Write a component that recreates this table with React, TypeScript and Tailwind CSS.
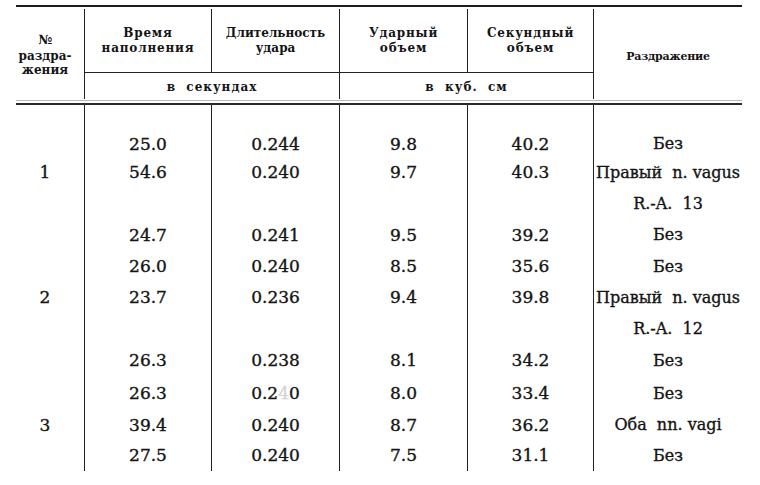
import React from 'react'

const widths = ['w-[68px]', 'w-[127px]', 'w-[128px]', 'w-[128px]', 'w-[126px]', 'w-[149px]']

const rowHeights = [
  'h-[27px]', 'h-[30px]', 'h-[32px]', 'h-[32px]', 'h-[31px]', 'h-[31px]',
  'h-[32px]', 'h-[33px]', 'h-[33px]', 'h-[30px]', 'h-[31px]',
]

type Cell = React.ReactNode

const rows: Cell[][] = [
  ['', '25.0', '0.244', '9.8', '40.2', 'Без'],
  ['1', '54.6', '0.240', '9.7', '40.3', 'Правый  n. vagus'],
  ['', '', '', '', '', 'R.-A.  13'],
  ['', '24.7', '0.241', '9.5', '39.2', 'Без'],
  ['', '26.0', '0.240', '8.5', '35.6', 'Без'],
  ['2', '23.7', '0.236', '9.4', '39.8', 'Правый  n. vagus'],
  ['', '', '', '', '', 'R.-A.  12'],
  ['', '26.3', '0.238', '8.1', '34.2', 'Без'],
  ['', '26.3', <>0.2<span className="text-[#d4d4d4]">4</span>0</>, '8.0', '33.4', 'Без'],
  ['3', '39.4', '0.240', '8.7', '36.2', 'Оба  nn. vagi'],
  ['', '27.5', '0.240', '7.5', '31.1', 'Без'],
]

function HeaderText({ children, tight }: { children: React.ReactNode; tight?: boolean }) {
  return (
    <div
      className={`text-[12px] font-bold leading-[15px] text-center ${tight ? 'tracking-[0px]' : 'tracking-[0.8px]'}`}
    >
      {children}
    </div>
  )
}

export default function App() {
  return (
    <div className="w-[760px] h-[485px] bg-white text-[#141414] pl-[16px] pt-[5px] font-['DejaVu_Serif',serif] overflow-hidden">
      <div className="w-[726px]">
        {/* верхняя линейка */}
        <div className="h-[2px] bg-[#1c1c1c]" />

        {/* шапка */}
        <div className="mt-[2px] grid grid-cols-[68px_127px_128px_128px_126px_149px] grid-rows-[63px_27px]">
          <div className="row-span-2 flex items-center justify-center pr-[10px] pt-[2px]">
            <div className="text-[12px] font-bold leading-[14px] text-center">
              <div className="text-[13px] mb-[2px]">№</div>
              <div>раздра-</div>
              <div>жения</div>
            </div>
          </div>
          <div className="border-l border-[#222] flex items-center justify-center">
            <HeaderText>
              Время
              <br />
              наполнения
            </HeaderText>
          </div>
          <div className="border-l border-[#222] flex items-center justify-center">
            <HeaderText tight>
              Длительность
              <br />
              удара
            </HeaderText>
          </div>
          <div className="border-l border-[#222] flex items-center justify-center">
            <HeaderText>
              Ударный
              <br />
              объем
            </HeaderText>
          </div>
          <div className="border-l border-[#222] flex items-center justify-center">
            <HeaderText>
              Секундный
              <br />
              объем
            </HeaderText>
          </div>
          <div className="row-span-2 border-l border-[#222] flex items-center justify-center pt-[7px]">
            <div className="text-[11px] font-bold tracking-[-0.2px]">Раздражение</div>
          </div>
          <div className="col-span-2 border-l border-t border-[#222] flex items-center justify-center pt-[1px]">
            <div className="text-[12px] font-bold tracking-[1px] whitespace-pre">в  секундах</div>
          </div>
          <div className="col-span-2 border-l border-t border-[#222] flex items-center justify-center pt-[1px]">
            <div className="text-[12px] font-bold tracking-[1px] whitespace-pre">в  куб.  см</div>
          </div>
        </div>

        {/* двойная линейка */}
        <div className="mt-[1px] h-px bg-[#b8b8b8]" />
        <div className="mt-[2px] h-[2px] bg-[#2a2a2a]" />

        {/* тело таблицы */}
        <div className="flex h-[366px] [-webkit-text-stroke:0.35px_currentColor]">
          {widths.map((w, ci) => (
            <div
              key={ci}
              className={`${w} shrink-0 flex flex-col pt-[26px] ${ci > 0 ? 'border-l border-[#222]' : 'pr-[10px]'}`}
            >
              {rows.map((r, ri) => (
                <div
                  key={ri}
                  className={`${rowHeights[ri]} flex items-center justify-center whitespace-pre ${
                    ci === 5 ? 'text-[16px]' : 'text-[17px]'
                  }`}
                >
                  {r[ci]}
                </div>
              ))}
            </div>
          ))}
        </div>
      </div>
    </div>
  )
}
